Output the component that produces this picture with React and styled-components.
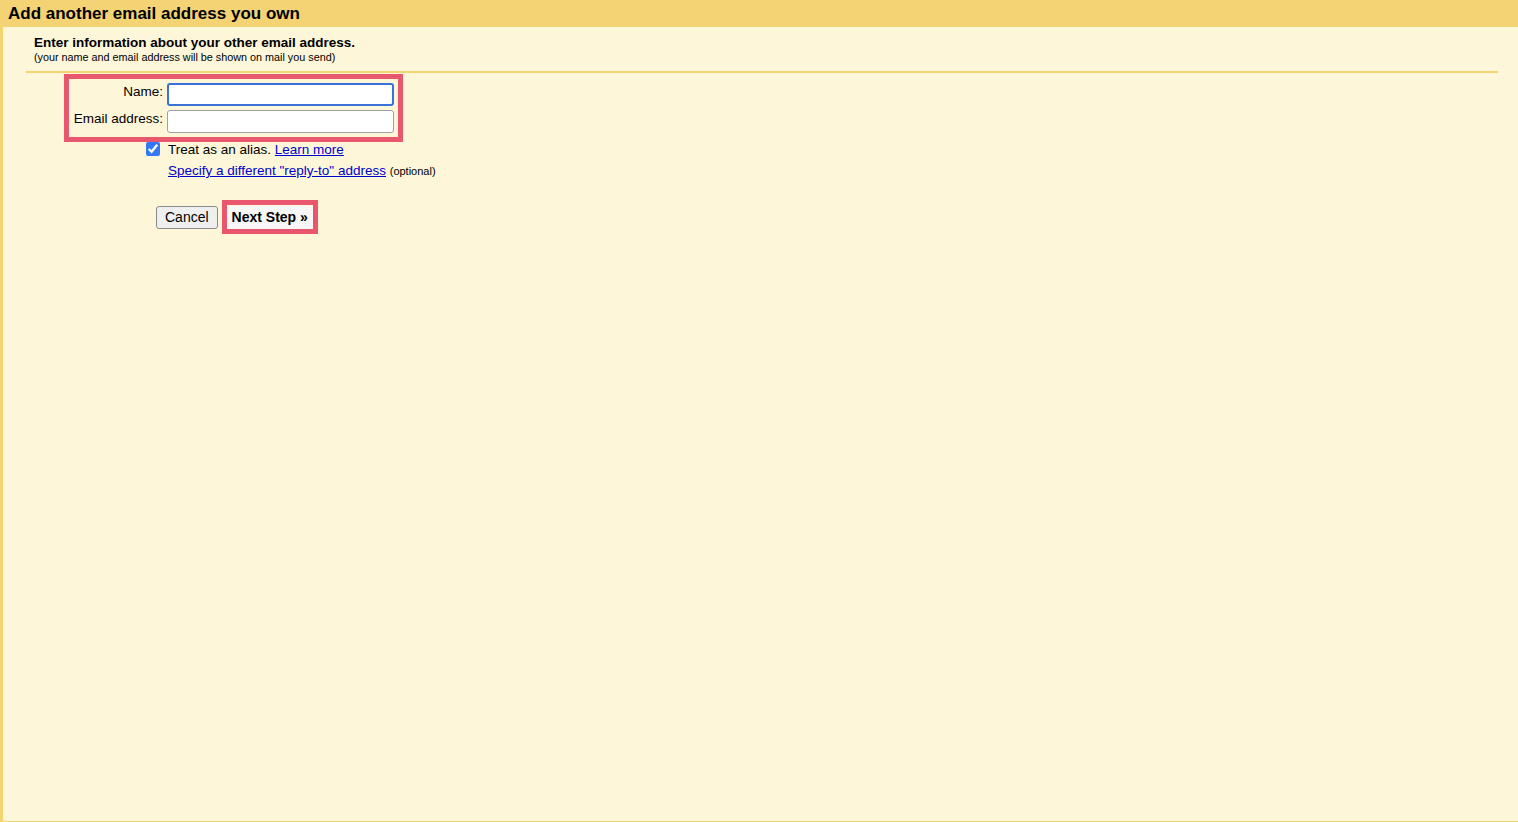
import styled, { createGlobalStyle } from "styled-components";

const GlobalStyle = createGlobalStyle`
  html, body {
    margin: 0;
    padding: 0;
    background-color: #fef6d9;
  }
  * {
    box-sizing: border-box;
  }
`;

const Frame = styled.div`
  min-height: 100vh;
  height: 822px;
  background-color: #fef6d9;
  border-left: 3px solid #f3d374;
  border-bottom: 1px solid #f3d374;
  font-family: "Liberation Sans", Arial, sans-serif;
  color: #000;
`;

const Header = styled.div`
  height: 27px;
  margin-left: -3px;
  padding-left: 8px;
  background-color: #f3d374;
  display: flex;
  align-items: center;
  font-size: 17px;
  font-weight: bold;
`;

const Intro = styled.div`
  padding: 8px 0 0 31px;
`;

const IntroTitle = styled.div`
  font-size: 13.5px;
  font-weight: bold;
  line-height: 16px;
`;

const IntroNote = styled.div`
  font-size: 10.8px;
  line-height: 12px;
`;

const Divider = styled.div`
  height: 2px;
  margin: 8px 20px 0 23px;
  background-color: #f3d374;
`;

const Form = styled.div`
  padding: 1px 0 0 61px;
`;

const Highlight = styled.div`
  display: inline-block;
  border: 5px solid #e9576f;
`;

const Fields = styled.div`
  display: grid;
  grid-template-columns: 94px 227px;
  grid-auto-rows: 23px;
  column-gap: 4px;
  row-gap: 4px;
  padding: 4px 4px 4px 0;
  align-items: start;
`;

const Label = styled.label`
  text-align: right;
  font-size: 13.5px;
  line-height: 16px;
  padding-top: 1px;
`;

const TextInput = styled.input`
  display: block;
  width: 227px;
  height: 23px;
  margin: 0;
  padding: 1px 4px;
  font-family: inherit;
  font-size: 13px;
  background: #fff;
  border: ${({ $focused }) => ($focused ? "2px solid #3b72d9" : "1px solid #a0a0a0")};
  border-radius: 3px;
  outline: none;
`;

const Options = styled.div`
  margin-top: -1px;
  padding-left: 82px;
  display: flex;
  flex-direction: column;
  gap: 6px;
  font-size: 13.5px;
`;

const CheckRow = styled.label`
  display: flex;
  align-items: center;
  gap: 8px;
  height: 16px;
`;

const Check = styled.input`
  width: 14px;
  height: 14px;
  margin: 0;
  accent-color: #3478f6;
`;

const Indented = styled.div`
  padding-left: 22px;
`;

const Link = styled.a`
  color: #0000cc;
  text-decoration: underline;
  cursor: pointer;
`;

const Small = styled.span`
  font-size: 11px;
`;

const Buttons = styled.div`
  display: flex;
  align-items: center;
  gap: 4px;
  margin-top: 22px;
  padding-left: 92px;
`;

const Button = styled.button`
  height: 23px;
  padding: 0 ${({ $primary }) => ($primary ? "5px" : "8px")};
  font-family: "Liberation Sans", Arial, sans-serif;
  font-size: 14px;
  font-weight: ${({ $primary }) => ($primary ? "bold" : "normal")};
  color: #000;
  background: ${({ $primary }) => ($primary ? "#f7f7f7" : "#efefef")};
  border: ${({ $primary }) => ($primary ? "none" : "1px solid #8a8a8a")};
  border-radius: 3px;
  cursor: pointer;
`;

const ButtonHighlight = styled.div`
  border: 5px solid #e9576f;
  height: 34px;
  display: flex;
  align-items: center;
`;

const App = () => {
  return (
    <>
      <GlobalStyle />
      <Frame>
        <Header>Add another email address you own</Header>
        <Intro>
          <IntroTitle>Enter information about your other email address.</IntroTitle>
          <IntroNote>(your name and email address will be shown on mail you send)</IntroNote>
        </Intro>
        <Divider />
        <Form>
          <Highlight>
            <Fields>
              <Label>Name:</Label>
              <TextInput $focused />
              <Label>Email address:</Label>
              <TextInput />
            </Fields>
          </Highlight>
          <Options>
            <CheckRow>
              <Check type="checkbox" defaultChecked />
              <span>
                Treat as an alias. <Link>Learn more</Link>
              </span>
            </CheckRow>
            <Indented>
              <Link>Specify a different "reply-to" address</Link> <Small>(optional)</Small>
            </Indented>
          </Options>
          <Buttons>
            <Button>Cancel</Button>
            <ButtonHighlight>
              <Button $primary>Next Step »</Button>
            </ButtonHighlight>
          </Buttons>
        </Form>
      </Frame>
    </>
  );
};

export default App;
